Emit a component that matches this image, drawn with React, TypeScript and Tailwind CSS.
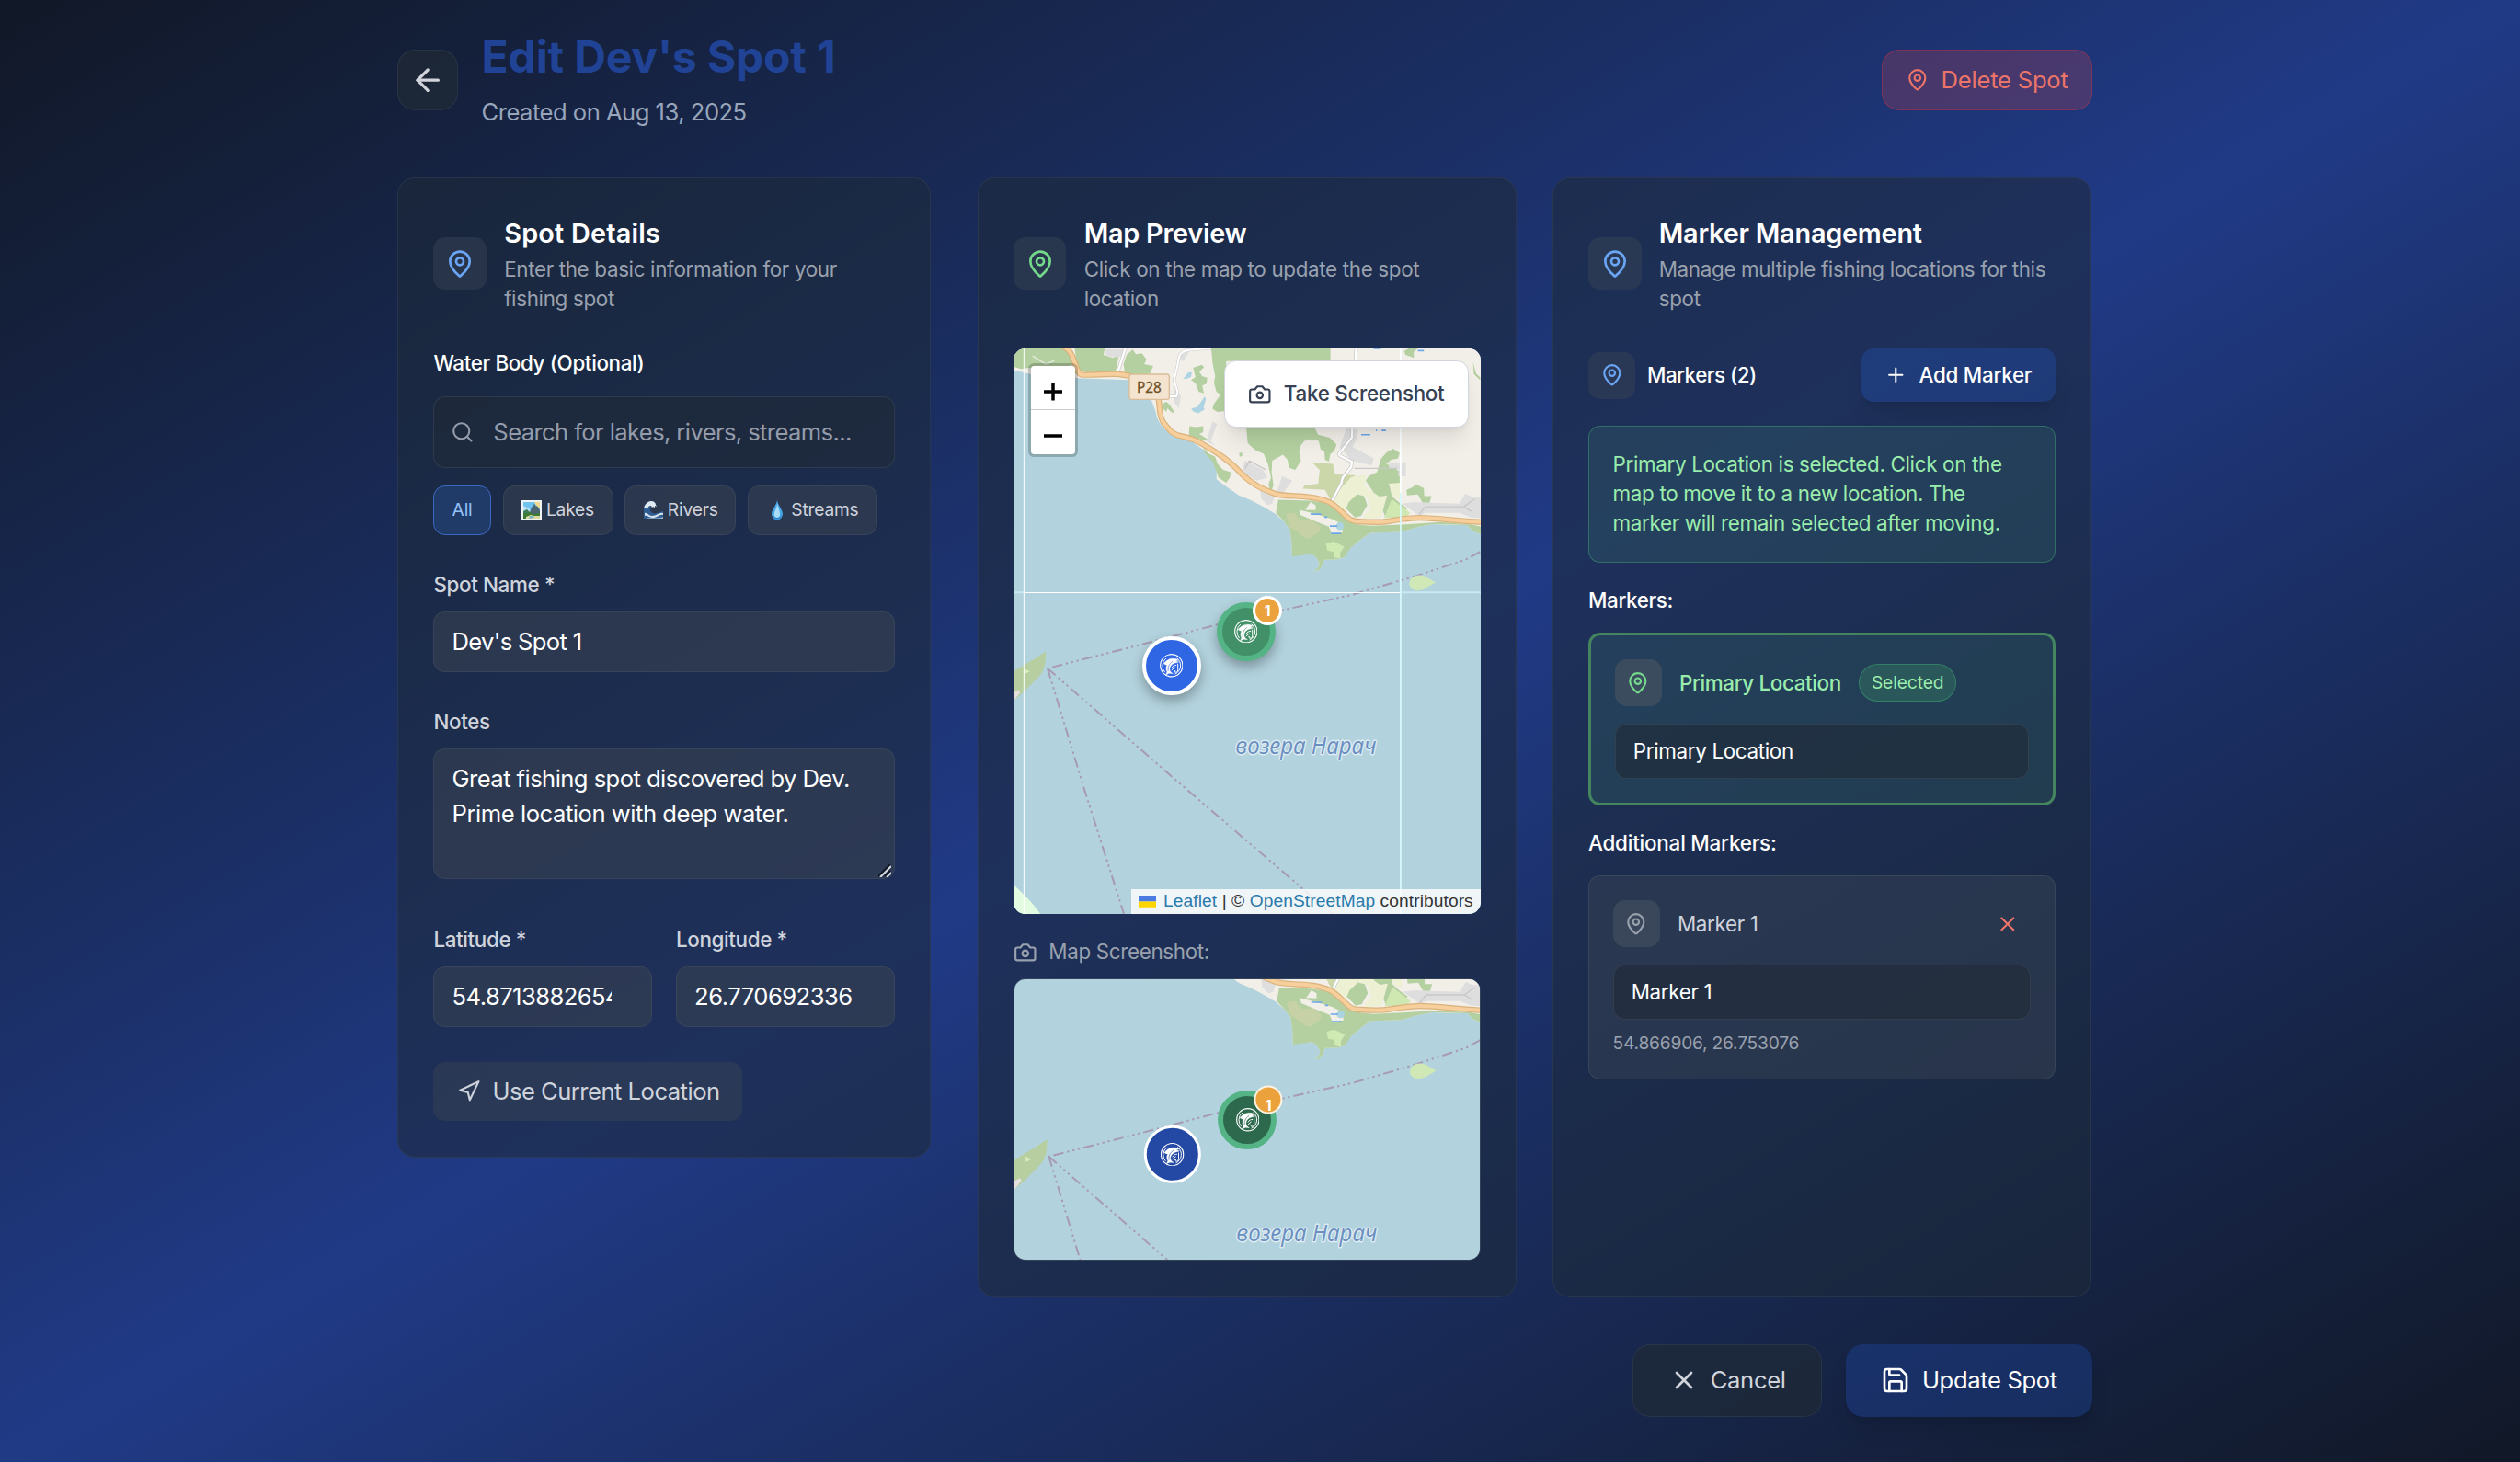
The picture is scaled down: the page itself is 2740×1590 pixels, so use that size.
import React from "react";
import { ArrowLeft, MapPin, Search, Navigation, Plus, X, Save } from "lucide-react";

const base = "text-base tracking-[-0.02em]";
const small = "text-sm tracking-[-0.015em]";
const smallMedium = "text-sm font-medium tracking-[-0.016em]";

function CameraIcon({ className }: { className: string }) {
  return (
    <svg viewBox="0 0 24 24" fill="none" stroke="currentColor" strokeWidth="2" strokeLinecap="round" strokeLinejoin="round" className={className}>
      <path d="M14.5 4h-5L7 7H4a2 2 0 0 0-2 2v9a2 2 0 0 0 2 2h16a2 2 0 0 0 2-2V9a2 2 0 0 0-2-2h-3l-2.500-3z" />
      <circle cx="12" cy="13" r="3" />
    </svg>
  );
}

function LakeEmoji() {
  return (
    <svg viewBox="0 0 22 22" className="h-[13.75px] w-[13.75px]">
      <rect width="22" height="22" fill="#eef3f4" />
      <rect x="2" y="2" width="18" height="18" fill="#6fc3ee" />
      <path d="M2 6l6 3 3 4H2z" fill="#b9e3f3" />
      <path d="M14 2h6v7l-3-2z" fill="#f3d98a" />
      <path d="M2 12l4-2 4 4-8 4z" fill="#3f7d5a" />
      <path d="M9 13l2-5 3-4 2 3 1-1 3 5v6H9z" fill="#4d6473" />
      <path d="M2 15l7-2 4 2 7-1v6H2z" fill="#3c7a35" />
      <path d="M5 18l5-2 4 1 6 0v3H5z" fill="#e0d9a0" />
      <path d="M9 17l4 0 1 2-6 1z" fill="#7db6c2" />
    </svg>
  );
}

function WaveEmoji() {
  return (
    <svg viewBox="0 0 22 22" className="h-[13.75px] w-[13.75px]">
      <path d="M1 20V10C1 4 5 1 9 1c3 0 5 2 5 4l-2-1 1 3-2-1c-2 0-4 2-3 5 1 3 4 4 7 3 3 0 5-2 7-2v8z" fill="#2f5c93" />
      <path d="M1 9C2 4 6 1 9 1c3 0 5 2 5 4l1 2-2-1v2l-2-1-1 1-1-2C6 6 5 8 5 11L3 8z" fill="#dfe9ef" />
      <path d="M2 14c3-1 4 3 8 3 5 0 8-4 12-3v2c-4-1-7 4-12 3-4 0-5-3-8-2z" fill="#d5e3ea" />
      <path d="M3 20c4-2 12 1 19-2v2z" fill="#8fb4cf" />
    </svg>
  );
}

function DropEmoji() {
  return (
    <svg viewBox="0 0 22 22" className="h-[13.75px] w-[13.75px]">
      <path d="M11 0C12 6 17 10 17 15a6 6.500 0 0 1-12 0C5 10 10 6 11 0z" fill="#43a5e4" />
      <path d="M11 3c1 5 3 8 3 12 0 3-1 4-3 4s-4-2-3-5c1-4 3-6 3-11z" fill="#a9dcf8" />
      <path d="M6 16c2 4 8 4 10 0-1 6-9 6-10 0z" fill="#2b7fd0" />
    </svg>
  );
}

function FishLogo() {
  return (
    <svg viewBox="0 0 78 78" fill="none" stroke="#fff" strokeLinecap="round" className="h-4 w-4">
      <circle cx="39" cy="39" r="37" strokeWidth="3.500" />
      <path d="M16 60A31 31 0 0 1 20 16M58 15A31 31 0 0 1 52 67" strokeWidth="3" />
      <path
        d="M13 33C20 22 32 15 45 16C53 16 58 18 62 21L52 24L63 27C58 31 50 30 45 33C37 37 33 44 33 52C33 58 37 62 44 66L31 65L20 70L24 60C20 54 20 44 24 37C20 37 16 36 13 33Z"
        fill="#fff"
        strokeWidth="1"
      />
      <path d="M28 56C26 46 31 33 42 26" stroke="currentColor" strokeWidth="2" />
      <path d="M60 34V54C60 64 48 64 48 56L52 58M40 46C44 40 48 38 54 38M40 54L50 46" strokeWidth="3" />
    </svg>
  );
}

const ROAD = "M168 2C196 16 200 42 208 60C214 82 220 95 232 95C275 95 330 91 350 93C400 97 470 120 480 178C484 215 484 240 500 257C515 275 525 288 545 293C580 300 600 307 625 322C680 355 705 372 735 402C770 440 800 462 860 483C890 492 930 488 975 494C1040 503 1050 517 1080 545C1105 570 1110 572 1135 573C1165 575 1200 577 1230 572C1290 562 1300 561 1330 561C1400 562 1450 572 1535 575";
const FERRY = ["M1528 672L1480 698L1321 750L1110 812L668 910L420 975L117 1052", "M117 1052L235 1440L366 1852", "M117 1052L540 1420L1054 1860"];

function LakeMap({ tiles, viewBox, className }: { tiles?: boolean; viewBox: string; className: string }) {
  return (
    <svg viewBox={viewBox} preserveAspectRatio="none" className={className}>
      <g transform="translate(-2 -3) scale(0.33333)">
        <rect x="0" y="0" width="1540" height="1870" fill="#b2d2dd" />
        <path
          d="M0 80C20 82 40 86 60 92L215 106L385 112L455 175L470 215C474 245 490 265 520 290L590 315L625 338L655 375C668 395 670 410 668 435L690 452L740 487L780 504L815 522L860 548L890 575L908 600L913 640L915 687C930 678 955 678 975 679L990 686L1003 706C1004 722 998 730 985 733C1000 737 1010 728 1012 716L1020 698L1060 697L1085 690C1095 660 1120 650 1140 630L1170 610L1220 608L1270 607L1320 592L1370 582L1430 585L1485 585L1505 605L1535 616V0H0z"
          fill="#f2efe9"
        />
        <path
          d="M870 502L975 505L1040 515L1075 550C1100 580 1130 585 1180 587L1270 583L1400 575L1500 583L1535 590V616L1505 605L1485 585L1370 582L1320 592L1270 607L1170 610L1140 630L1105 660L1085 690L1060 697L1020 698L1012 716C1010 728 1000 737 985 733C998 730 1004 722 1003 706L990 686L975 679L915 687L913 640L908 600L890 575L862 545z"
          fill="#b4d0a0"
        />
        <g fill="#b4d0a0">
          <path d="M0 0H175L190 25L215 90L190 95L60 72L30 76L0 66z" />
          <path d="M205 0H305L300 30L330 40L350 30L340 80L345 92L250 88L222 82L210 50z" />
          <path d="M370 92L365 60L375 30L395 12L405 28L425 25L440 45L432 60L462 66L450 92L420 95z" />
          <path d="M650 0H1040L1040 50H700V212L672 216L655 206L660 190L682 160L668 150L660 120L664 100L656 60z" />
          <path d="M592 72L620 62L628 70L612 85L622 100L638 104L636 124L622 130L627 155L610 150L600 122L585 112L600 102z" />
          <path d="M490 190L505 183L515 192L528 212L529 220L518 214L508 204L505 216L496 208z" />
          <path d="M580 262L600 265L625 262V282L612 288L640 305L630 310L600 300L578 292z" />
          <path d="M625 330L640 350L664 362L672 385L690 405L715 412L712 430L700 447L675 430L668 410L655 378L630 350z" />
          <path d="M742 350l10 -2l0 12l-8 2z" />
          <path d="M765 262H985L1000 290L1038 300L1060 322L1052 345L1040 352L1035 378L1022 372L1020 345L1008 338L1002 310L975 305L955 310L940 330L938 350L944 375L925 405L905 398L900 372L885 355L850 375L848 412L854 455L845 480L838 452L846 430L836 385L822 352L795 340L770 318z" />
          <path d="M1155 440L1165 425L1192 412L1205 368L1225 346L1245 336L1266 350L1260 368L1238 372L1222 385L1250 398L1266 412V452L1232 452L1240 490L1262 510L1290 530L1270 560L1220 560L1195 500z" />
          <path d="M1100 505L1120 482L1150 490L1160 520L1140 555L1120 560L1080 520z" />
          <path d="M1288 470L1308 462L1318 452L1345 465L1346 490L1370 490L1362 515L1345 520L1325 485L1290 488z" />
          <path d="M1280 18L1300 5H1330L1312 20V40L1285 30z" />
          <path d="M1505 55L1515 90L1530 105L1528 112L1508 92z" />
        </g>
        <g fill="#dedede">
          <path d="M305 12H372L368 25L350 38L310 34z" />
          <path d="M555 20L580 18L560 50L550 48z" />
          <path d="M533 140L552 165L545 205L528 180z" />
          <path d="M655 248L670 255L650 312L665 325L635 312z" />
          <path d="M760 375L820 405L835 430L800 440L752 412z" />
          <path d="M882 425L915 440L890 475L865 480z" />
          <path d="M810 470L860 485L850 515L835 520L815 500z" />
          <path d="M1070 330L1092 270L1130 275L1128 300L1112 330L1182 368L1175 390L1110 375z" />
          <path d="M1230 380H1286V426H1262V402H1232z" />
          <path d="M1275 515L1310 510L1460 515L1480 482L1500 492H1535V562L1500 560L1460 545H1350L1330 555z" />
        </g>
        <path d="M980 380L1048 385L1055 420L1120 422L1112 450L1080 470L1045 512L1022 470L950 466L955 456L1000 450L1005 405z" fill="#cbd6a9" />
        <path d="M1108 428L1155 420L1152 460L1200 492L1225 488L1205 560L1150 565L1148 555L1172 530L1160 495L1130 482L1100 510L1085 545L1040 512L1060 480z" fill="#edf0d3" />
        <path d="M1230 450L1270 447V505L1245 490z" fill="#edf0d3" />
        <path d="M1240 500L1300 545L1290 556L1215 562z" fill="#cfe8b2" />
        <path d="M895 548L925 545L932 560L950 572L980 568L1008 590L1005 605L970 630L955 625L925 602L905 590z" fill="#c6d2a5" />
        <path d="M1025 645L1050 638L1085 655L1072 675V694L1052 690L1050 672L1030 668z" fill="#d0eab4" />
        <path d="M938 535L990 548L1045 565L1078 582L1080 608L1045 615L1035 590L990 572L942 552z" fill="#f2efe9" />
        <circle cx="1071" cy="588" r="13" fill="#abd4e0" />
        <path d="M958 535L975 510L992 520V536z" fill="#f2efe9" />
        <g fill="#aed3e2">
          <path d="M560 108L575 88L588 86L585 102L570 108z" />
          <path d="M586 205L605 200L620 180L630 165L634 175L626 200L630 208L608 220L592 214z" />
        </g>
        <g fill="none" stroke="#fff">
          <path d="M372 5L345 90" stroke="#c9c9c9" strokeWidth="11" />
          <path d="M372 5L345 90" strokeWidth="7" />
          <path d="M650 8L575 14C548 22 545 30 542 60L530 112L541 150L538 165H515" stroke="#c9c9c9" strokeWidth="9" />
          <path d="M650 8L575 14C548 22 545 30 542 60L530 112L541 150L538 165H515" strokeWidth="6" />
          <path d="M1124 5L1112 250L1110 300L1068 352L1070 358L1110 378L1108 395L1080 430L1075 450L1040 515" stroke="#c4c4c4" strokeWidth="11" />
          <path d="M1124 5L1112 250L1110 300L1068 352L1070 358L1110 378L1108 395L1080 430L1075 450L1040 515" strokeWidth="7" />
          <path d="M1118 400H1258M762 400L775 375L830 405M1330 550L1350 525H1475L1500 540M1475 525L1510 500" stroke="#c8c8c8" strokeWidth="4" />
          <path d="M68 34L112 60L140 48M170 72L208 62" stroke="#dfe8d4" strokeWidth="5" />
        </g>
        <path d={ROAD} fill="none" stroke="#dbb27b" strokeWidth="19" />
        <path d={ROAD} fill="none" stroke="#f6cf9c" strokeWidth="12" />
        <path d="M975 549H1010M1020 559H1030M1038 588H1062M1042 612H1074M1140 290H1170M1188 276H1192M1207 276H1221M1180 9H1205M1325 16H1345" stroke="#6ba7ea" strokeWidth="5" />
        <g fill="none" stroke="#a79bb4" strokeWidth="6">
          {FERRY.map((d) => (
            <path key={d} d={d} strokeDasharray="34 12 7 11 7 11 7 12" />
          ))}
        </g>
        <path d="M0 1066C40 1040 80 1020 111 996C112 1030 108 1055 93 1074L40 1128L6 1158H0z" fill="#b7cfa0" />
        <path d="M40 1052l20 10l-18 8z" fill="#d5ecb8" />
        <path d="M0 1135L22 1122L28 1130L6 1158H0z" fill="#e6dfe0" />
        <path d="M1297 775C1300 752 1325 742 1348 752L1384 772C1365 780 1345 800 1320 798C1305 796 1297 785 1297 775z" fill="#d0e8b6" />
        <path d="M0 1752C30 1780 70 1815 98 1860H0z" fill="#e3fbe0" />
        {tiles && (
          <g>
            <path d="M0 804H40M1272 804H1530" stroke="#c9e8f1" strokeWidth="6" />
            <path d="M40 805H1268" stroke="#fff" strokeWidth="3" />
            <path d="M40 0V1870" stroke="#fff" strokeWidth="3" />
            <path d="M1269 0V1870" stroke="#d9fbff" strokeWidth="5" />
            <path d="M1269 0V480" stroke="#fff" strokeWidth="5" />
          </g>
        )}
        <rect x="384" y="93" width="130" height="82" rx="7" fill="#f3e3cf" stroke="#d9bd98" strokeWidth="4" />
        <text x="408" y="152" textLength="80" lengthAdjust="spacingAndGlyphs" fill="#6d5126" stroke="#6d5126" strokeWidth="1" fontSize="48" fontFamily="Noto Sans, sans-serif">
          P28
        </text>
        <text
          x="730"
          y="1330"
          textLength="460"
          lengthAdjust="spacingAndGlyphs"
          fill="#6a8fc0"
          stroke="#ddebf2"
          strokeWidth="9"
          strokeLinejoin="round"
          paintOrder="stroke"
          fontSize="76"
          fontStyle="italic"
          fontFamily="Open Sans, Noto Sans, sans-serif"
        >
          возера Нарач
        </text>
      </g>
    </svg>
  );
}

function CardHeader({ title, text, green, tracking }: { title: string; text: string; green?: boolean; tracking: string }) {
  return (
    <div className="mb-6 flex items-center gap-3">
      <div className="shrink-0 rounded-lg bg-gray-700/50 p-2">
        <MapPin className={green ? "h-5 w-5 text-[#74d98b]" : "h-5 w-5 text-[#6ba5f5]"} />
      </div>
      <div>
        <h2 className={"text-lg font-semibold text-white " + tracking}>{title}</h2>
        <p className={small + " text-[#99a1ae]"}>{text}</p>
      </div>
    </div>
  );
}

const card = "rounded-xl border border-gray-700/50 bg-gray-800/55 p-6";
const field = "rounded-lg border border-gray-600/40 bg-[#374151]/60 px-3 py-2 text-white";
const label = smallMedium + " mb-2 block text-[#cfd3dc]";

export default function App() {
  return (
    <div className="h-[1590px] w-[2740px] overflow-hidden bg-linear-to-br from-[#111827] via-[#203a86] to-[#111827] font-['Inter',sans-serif]">
      <div className="pt-[20.5px] pr-[20.5px] [zoom:1.6]">
        <div className="mx-auto w-[1152px]">
          <header className="mb-8 flex items-center justify-between">
            <div className="flex items-center gap-4">
              <button className="rounded-xl border border-gray-700/50 bg-[#1f2937]/75 p-2 text-[#d1d5db]">
                <ArrowLeft className="h-6 w-6" />
              </button>
              <div>
                <h1 className="mb-2 text-3xl font-bold tracking-[-0.003em] text-[#214395]">Edit Dev's Spot 1</h1>
                <p className="text-base tracking-[-0.02em] text-[#98a5bb]">Created on Aug 13, 2025</p>
              </div>
            </div>
            <button className="flex items-center gap-2 rounded-xl border border-red-500/30 bg-[#ef4444]/20 px-4 py-2 text-[#ec7469]">
              <MapPin className="h-4 w-4" />
              <span className="text-base tracking-[-0.009em]">Delete Spot</span>
            </button>
          </header>

          <div className="grid grid-cols-3 items-start gap-8">
            <section className={card}>
              <CardHeader title="Spot Details" text="Enter the basic information for your fishing spot" tracking="tracking-[0.008em]" />
              <h3 className={smallMedium + " mb-3 text-white"}>Water Body (Optional)</h3>
              <div className="flex items-center rounded-lg border border-gray-600/40 bg-[#1f2937]/60 px-3 py-3 text-[#949cab]">
                <Search className="mr-3 -ml-px h-4 w-4" />
                <span className="ml-px text-base tracking-[-0.024em]">Search for lakes, rivers, streams...</span>
              </div>
              <div className="mt-3 flex gap-2 text-xs text-[#cfd3dc]">
                <span className="w-[39px] rounded-lg border border-[#3b69c0] bg-[#3b82f6]/20 py-2 text-center tracking-[-0.01em] text-[#93c0f8]">All</span>
                <span className="flex w-[75px] items-center justify-center gap-[3px] rounded-lg border border-gray-600/40 bg-[#374151]/60 py-2 tracking-[-0.01em]">
                  <LakeEmoji />
                  Lakes
                </span>
                <span className="flex w-[75.6px] items-center justify-center gap-[3px] rounded-lg border border-gray-600/40 bg-[#374151]/60 py-2 tracking-[-0.01em]">
                  <WaveEmoji />
                  Rivers
                </span>
                <span className="flex w-[88px] items-center justify-center gap-[3px] rounded-lg border border-gray-600/40 bg-[#374151]/60 py-2 tracking-[-0.01em]">
                  <DropEmoji />
                  Streams
                </span>
              </div>

              <div className="mt-6">
                <span className={label}>Spot Name *</span>
                <div className={field + " text-base tracking-[-0.027em]"}>Dev's Spot 1</div>
              </div>

              <div className="mt-6">
                <span className={label}>Notes</span>
                <div className={field + " relative h-[89px] text-base tracking-[-0.022em]"}>
                  <p>Great fishing spot discovered by Dev.</p>
                  <p className="tracking-[-0.018em]">Prime location with deep water.</p>
                  <svg viewBox="0 0 14 14" className="absolute right-[1.5px] bottom-[1px] h-[8.75px] w-[8.75px]" fill="none">
                    <path d="M0 13L13 0M7 13L13 7" stroke="#111827" strokeWidth="2" />
                    <path d="M2 14L14 2M9 14L14 9" stroke="#d5d8de" strokeWidth="2" />
                  </svg>
                </div>
              </div>

              <div className="mt-[31px] grid grid-cols-2 gap-4">
                <div>
                  <span className={label}>Latitude *</span>
                  <div className={field + " text-base tracking-[-0.022em]"}>
                    <div className="w-[108.5px] overflow-hidden">54.8713882654</div>
                  </div>
                </div>
                <div>
                  <span className={label}>Longitude *</span>
                  <div className={field + " text-base tracking-[-0.02em]"}>26.770692336</div>
                </div>
              </div>

              <button className="mt-6 flex w-[210px] items-center gap-2 rounded-lg bg-gray-700/50 px-4 py-2 text-[#cfd3dc]">
                <Navigation className="h-4 w-4 shrink-0" />
                <span className={base + " whitespace-nowrap"}>Use Current Location</span>
              </button>
            </section>

            <div className="col-span-2 mr-[0.6px] -ml-[0.6px] grid grid-cols-2 gap-6">
              <section className={card}>
                <CardHeader title="Map Preview" text="Click on the map to update the spot location" green tracking="tracking-[-0.008em]" />
                <div className="relative h-96 overflow-hidden rounded-lg">
                  <LakeMap tiles viewBox="0 0 508 614" className="block h-full w-full" />
                  <div className="absolute top-2.5 left-2.5 w-[34px] overflow-hidden rounded-[4px] border-2 border-black/20 bg-white bg-clip-padding">
                    <div className="flex h-[30px] items-center justify-center border-b border-[#ccc] pt-[5px]">
                      <svg viewBox="0 0 20 20" className="h-[12.5px] w-[12.5px]">
                        <path d="M0 10H20M10 0.500V19.500" stroke="#000" strokeWidth="3.500" />
                      </svg>
                    </div>
                    <div className="flex h-[30px] items-center justify-center pt-[4px]">
                      <svg viewBox="0 0 20 20" className="h-[12.5px] w-[12.5px]">
                        <path d="M0 10H20" stroke="#000" strokeWidth="3.500" />
                      </svg>
                    </div>
                  </div>
                  <button className="absolute top-2 right-2 flex items-center gap-2 rounded-lg border border-gray-300 bg-white px-4 py-3 text-[#374151] shadow-lg">
                    <CameraIcon className="h-4 w-4" />
                    <span className="text-sm font-medium tracking-[-0.013em]">Take Screenshot</span>
                  </button>
                  <div className="absolute top-[192px] left-[158px] flex h-10 w-10 -translate-1/2 items-center justify-center rounded-full border-4 border-[#54b485] bg-[#429068] text-[#429068] shadow-[0_4px_8px_rgba(0,0,0,0.3)]">
                    <FishLogo />
                  </div>
                  <div className="absolute top-[215.3px] left-[107.3px] flex h-10 w-10 -translate-1/2 items-center justify-center rounded-full border-3 border-white bg-[#2f66e3] text-[#2f66e3] shadow-[0_4px_8px_rgba(0,0,0,0.3)]">
                    <FishLogo />
                  </div>
                  <div className="absolute top-[177.800px] left-[172.700px] flex h-5 w-5 -translate-1/2 items-center justify-center rounded-full border-2 border-white bg-[#eba13c] text-[10px] leading-none font-bold text-white">1</div>
                  <div className="absolute right-0 bottom-0 flex h-[17px] items-center bg-white/80 px-[5px] font-['Liberation_Sans',sans-serif] text-xs tracking-[0.004em] whitespace-pre text-[#333]">
                    <svg viewBox="0 0 12 8" className="mr-[5px] h-[8px] w-[12px]">
                      <path d="M0 0H12V4H0z" fill="#4C7BE1" />
                      <path d="M0 4H12V8H0z" fill="#FFD500" />
                    </svg>
                    <span className="text-[#2a7aab]">Leaflet</span> | © <span className="text-[#2a7aab]">OpenStreetMap</span> contributors
                  </div>
                </div>

                <div className="mt-4 mb-2 flex items-center gap-2 text-[#99a1ae]">
                  <CameraIcon className="h-4 w-4" />
                  <span className={small}>Map Screenshot:</span>
                </div>
                <div className="relative h-48 overflow-hidden rounded-lg border border-gray-600/50">
                  <LakeMap viewBox="-0.5 155 507 305" className="block h-full w-full" />
                  <div className="absolute top-[95.700px] left-[158.500px] flex h-10 w-10 -translate-1/2 items-center justify-center rounded-full border-4 border-[#54b485] bg-[#2d6a4d] text-[#2d6a4d]">
                    <FishLogo />
                  </div>
                  <div className="absolute top-[118.800px] left-[107.600px] flex h-[39px] w-[39px] -translate-1/2 items-center justify-center rounded-full border-2 border-white bg-[#2349a5] text-[#2349a5]">
                    <FishLogo />
                  </div>
                  <div className="absolute top-[81.500px] left-[172.700px] flex h-[19.500px] w-[19.500px] -translate-1/2 items-end justify-center rounded-full border-[1.500px] border-[#fdf3e2] bg-[#eba13c] text-[10px] leading-[8px] font-bold text-white">1</div>
                </div>
              </section>

              <section className={card}>
                <CardHeader title="Marker Management" text="Manage multiple fishing locations for this spot" tracking="tracking-[-0.007em]" />
                <div className="flex items-center justify-between">
                  <div className="flex items-center gap-2">
                    <div className="rounded-lg bg-gray-700/50 p-2">
                      <MapPin className="h-4 w-4 text-[#6ba5f5]" />
                    </div>
                    <h3 className="text-sm font-medium tracking-[-0.022em] text-white">Markers (2)</h3>
                  </div>
                  <button className="flex w-[132px] items-center gap-2 rounded-lg bg-[#2563eb]/22 px-4 py-2 text-white shadow-lg">
                    <Plus className="h-4 w-4" />
                    <span className="text-sm font-medium tracking-[-0.012em] whitespace-nowrap">Add Marker</span>
                  </button>
                </div>

                <div className="mt-4 rounded-lg border border-[#4bc57a]/35 bg-[#5ec57e]/11 p-4">
                  <p className={small + " text-[#9aecac]"}>
                    Primary Location is selected. Click on the
                    <br />
                    map to move it to a new location. The
                    <br />
                    marker will remain selected after moving.
                  </p>
                </div>

                <h4 className={smallMedium + " mt-4 mb-3 text-white"}>Markers:</h4>
                <div className="rounded-lg border-2 border-[#44855f] bg-[#5ec57e]/11 p-4">
                  <div className="mb-3 flex items-center gap-3">
                    <div className="rounded-lg bg-[#4b5563]/60 p-2">
                      <MapPin className="h-4 w-4 text-[#74d98b]" />
                    </div>
                    <span className={smallMedium + " text-[#9aecac]"}>Primary Location</span>
                    <span className="rounded-full border border-[#4ade80]/30 bg-[#4bc56e]/20 px-2 py-1 text-xs tracking-[-0.005em] text-[#9aecac]">Selected</span>
                  </div>
                  <div className={"rounded-lg border border-gray-600/40 bg-[#1f2937]/60 px-3 py-2 text-white " + small}>Primary Location</div>
                </div>

                <h4 className="mt-4 mb-3 text-sm font-medium tracking-[-0.009em] text-white">Additional Markers:</h4>
                <div className="rounded-lg border border-gray-600/50 bg-gray-700/50 p-4">
                  <div className="mb-3 flex items-center gap-3">
                    <div className="rounded-lg bg-[#4b5563]/50 p-2">
                      <MapPin className="h-4 w-4 text-[#99a1ae]" />
                    </div>
                    <span className={small + " text-[#cfd3dc]"}>Marker 1</span>
                    <button className="ml-auto p-2 text-[#ec7469]">
                      <X className="h-4 w-4" />
                    </button>
                  </div>
                  <div className={"rounded-lg border border-gray-600/40 bg-[#1f2937]/60 px-3 py-2 text-white " + small}>Marker 1</div>
                  <p className="mt-2 text-xs tracking-[-0.011em] text-[#99a1ae]">54.866906, 26.753076</p>
                </div>
              </section>
            </div>
          </div>

          <footer className="mt-8 flex justify-end gap-4">
            <button className="flex items-center gap-2 rounded-xl border border-gray-700/50 bg-[#1f2937]/75 px-6 py-3 text-[#d1d5db]">
              <X className="h-5 w-5" />
              <span className="text-base tracking-[-0.012em]">Cancel</span>
            </button>
            <button className="flex items-center gap-2 rounded-xl bg-[#2563eb]/22 px-6 py-3 text-white shadow-lg">
              <Save className="h-5 w-5" />
              <span className="text-base tracking-[-0.014em]">Update Spot</span>
            </button>
          </footer>
        </div>
      </div>
    </div>
  );
}
